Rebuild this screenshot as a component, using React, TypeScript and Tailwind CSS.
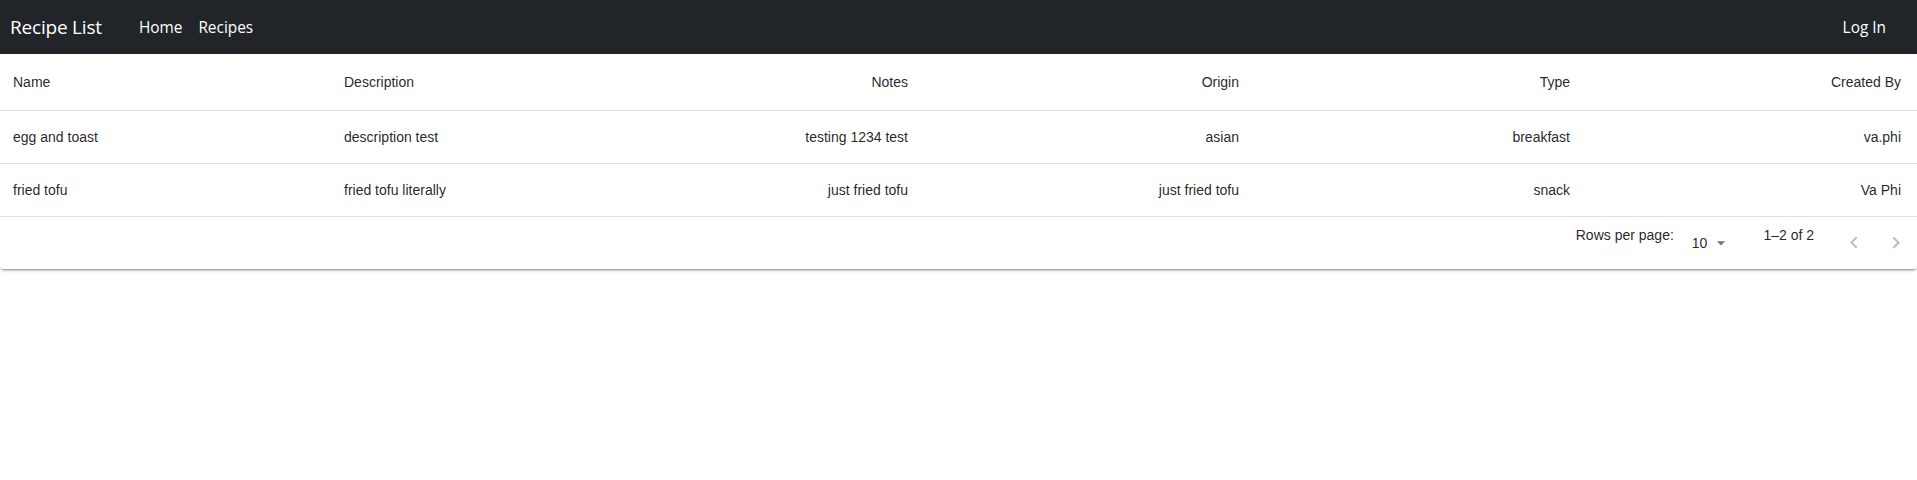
const recipes = [
  { name: "egg and toast", description: "description test", notes: "testing 1234 test", origin: "asian", type: "breakfast", createdBy: "va.phi" },
  { name: "fried tofu", description: "fried tofu literally", notes: "just fried tofu", origin: "just fried tofu", type: "snack", createdBy: "Va Phi" },
];

const cell = "border-b border-[#e0e0e0] py-0 px-4";

function Navbar() {
  return (
    <nav className="h-[54px] bg-[#212529] flex items-center text-white font-['Open_Sans',sans-serif]">
      <a className="ml-[10px] text-[19px] leading-none tracking-[-0.2px]">Recipe List</a>
      <div className="ml-[37px] flex items-center gap-[16px] text-[15.4px] leading-none pt-[1px]">
        <a>Home</a>
        <a>Recipes</a>
      </div>
      <a className="ml-auto mr-[31px] text-[15.4px] leading-none pt-[2px]">Log In</a>
    </nav>
  );
}

function Chevron({ right }: { right?: boolean }) {
  return (
    <svg viewBox="0 0 24 24" className="w-[24px] h-[24px] fill-[rgba(0,0,0,0.26)]">
      <path
        d={
          right
            ? "M8.59 16.34l4.58-4.59-4.58-4.59L10 5.75l6 6-6 6z"
            : "M15.41 16.09l-4.58-4.59 4.58-4.59L14 5.5l-6 6 6 6z"
        }
      />
    </svg>
  );
}

export default function App() {
  return (
    <div className="bg-white min-h-screen">
      <Navbar />
      <div className="rounded-[4px] bg-white shadow-[0_3px_1px_-2px_rgba(0,0,0,0.2),0_2px_2px_0_rgba(0,0,0,0.14),0_1px_5px_0_rgba(0,0,0,0.12)] font-['Liberation_Sans',Arial,sans-serif] text-[14px] text-[rgba(0,0,0,0.87)]">
        <table className="w-full table-fixed border-collapse">
          <colgroup>
            <col className="w-[328px]" />
            <col className="w-[298px]" />
            <col className="w-[298px]" />
            <col className="w-[331px]" />
            <col className="w-[331px]" />
            <col className="w-[331px]" />
          </colgroup>
          <thead>
            <tr className="h-[56px]">
              <th className={`${cell} !pl-[13px] pt-[1px] text-left font-normal`}>Name</th>
              <th className={`${cell} pt-[1px] text-left font-normal`}>Description</th>
              <th className={`${cell} pt-[1px] text-right font-normal`}>Notes</th>
              <th className={`${cell} pt-[1px] text-right font-normal`}>Origin</th>
              <th className={`${cell} pt-[1px] text-right font-normal`}>Type</th>
              <th className={`${cell} pt-[1px] text-right font-normal`}>Created By</th>
            </tr>
          </thead>
          <tbody>
            {recipes.map((r) => (
              <tr key={r.name} className="h-[53px]">
                <td className={`${cell} !pl-[13px] pt-[1px] text-left`}>{r.name}</td>
                <td className={`${cell} pt-[1px] text-left`}>{r.description}</td>
                <td className={`${cell} pt-[1px] text-right`}>{r.notes}</td>
                <td className={`${cell} pt-[1px] text-right`}>{r.origin}</td>
                <td className={`${cell} pt-[1px] text-right`}>{r.type}</td>
                <td className={`${cell} pt-[1px] text-right`}>{r.createdBy}</td>
              </tr>
            ))}
          </tbody>
        </table>
        <div className="h-[52px] flex items-center justify-end pr-[9px]">
          <p className="mb-4 leading-[20px]">Rows per page:</p>
          <div className="ml-[18px] flex items-center">
            <span className="leading-[20px]">10</span>
            <svg viewBox="0 0 24 24" className="ml-[4px] w-[20px] h-[20px] fill-[rgba(0,0,0,0.54)]">
              <path d="M7 10l5 5 5-5z" />
            </svg>
          </div>
          <p className="ml-[32px] mb-4 leading-[20px]">1–2 of 2</p>
          <div className="ml-[28px] flex items-center gap-[18px]">
            <Chevron />
            <Chevron right />
          </div>
        </div>
      </div>
    </div>
  );
}
